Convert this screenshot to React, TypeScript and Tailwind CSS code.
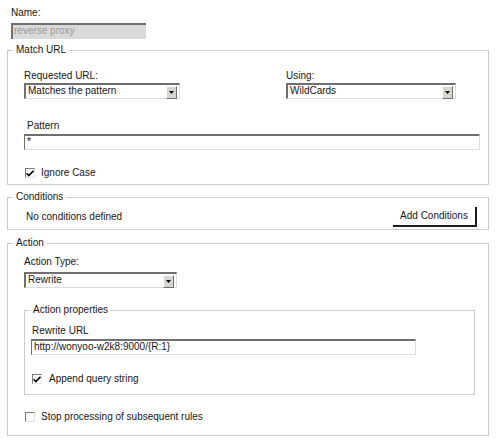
import React from 'react'

const font = { fontFamily: '"Liberation Sans", Arial, sans-serif' }

function Arrow() {
  return (
    <div className="absolute right-[2px] top-[1px] flex h-[13px] w-[11px] items-center justify-center border-t border-l border-white border-r border-b border-r-[#707070] border-b-[#707070] bg-[#d8d6d0]">
      <svg width="5" height="3" viewBox="0 0 5 3">
        <path d="M0 0h5L2.5 3z" fill="#000" />
      </svg>
    </div>
  )
}

function Select({ value, width }: { value: string; width: string }) {
  return (
    <div
      className={`relative h-[16px] ${width} border-t-2 border-l-2 border-t-[#6f6f6f] border-l-[#6f6f6f] border-r border-b border-r-[#dcdcdc] border-b-[#dcdcdc] bg-white pl-[2px] leading-[12px]`}
    >
      {value}
      <Arrow />
    </div>
  )
}

function TextBox({ value, width, className = '' }: { value: string; width: string; className?: string }) {
  return (
    <div
      className={`h-[16px] ${width} border-t-2 border-l border-t-[#6f6f6f] border-l-[#6f6f6f] border-r border-b border-r-[#dcdcdc] border-b-[#dcdcdc] bg-white pl-[2px] leading-[12px] ${className}`}
    >
      {value}
    </div>
  )
}

function Check({ checked }: { checked: boolean }) {
  return (
    <div className="flex h-[10px] w-[10px] items-center justify-center border-t border-l border-t-[#7a7a7a] border-l-[#7a7a7a] border-r border-b border-r-[#e4e4e4] border-b-[#e4e4e4] bg-white">
      {checked && (
        <svg width="8" height="7" viewBox="0 0 8 7">
          <path d="M0.5 3.2 L2.8 5.5 L7.5 0.8" stroke="#000" strokeWidth="1.6" fill="none" />
        </svg>
      )}
    </div>
  )
}

function Group({
  title,
  className,
  children,
}: {
  title: string
  className: string
  children: React.ReactNode
}) {
  return (
    <fieldset className={`border border-[#cbcbcb] p-0 ${className}`}>
      <legend className="ml-[5px] px-[3px] leading-[12px]">{title}</legend>
      {children}
    </fieldset>
  )
}

export default function App() {
  return (
    <div className="h-[442px] w-[504px] overflow-hidden bg-white text-[10px] text-[#161616]" style={font}>
      {/* Name */}
      <div className="ml-[11px] pt-[7px] leading-[12px]">Name:</div>
      <div className="ml-[11px] mt-[4px] h-[16px] w-[135px] border-t-2 border-l-2 border-t-[#707070] border-l-[#707070] bg-[#d9d9d9] pl-[1px] leading-[12px] text-[#9a9a9a]">
        reverse proxy
      </div>

      <div className="px-[7px]">
        {/* Match URL */}
        <Group title="Match URL" className="mt-[5px] h-[141px] w-[482px]">
          <div className="mt-[14px] flex pl-[16px]">
            <div className="w-[262px]">
              <div className="leading-[12px]">Requested URL:</div>
              <div className="mt-[1px]">
                <Select value="Matches the pattern" width="w-[156px]" />
              </div>
            </div>
            <div>
              <div className="leading-[12px]">Using:</div>
              <div className="mt-[1px]">
                <Select value="WildCards" width="w-[170px]" />
              </div>
            </div>
          </div>
          <div className="mt-[21px] pl-[19px] leading-[12px]">Pattern</div>
          <div className="mt-[2px] pl-[16px]">
            <TextBox value="*" width="w-[456px]" />
          </div>
          <div className="mt-[17px] flex items-center gap-[6px] pl-[17px] leading-[12px]">
            <Check checked />
            <span>Ignore Case</span>
          </div>
        </Group>

        {/* Conditions */}
        <Group title="Conditions" className="mt-[6px] h-[39px] w-[482px]">
          <div className="mt-[4px] flex items-center justify-between pl-[18px] pr-[11px]">
            <span className="leading-[12px]">No conditions defined</span>
            <button className="h-[20px] w-[84px] border-r-2 border-b-2 border-[#1c1c1c] bg-white text-[10px] leading-[12px]">
              Add Conditions
            </button>
          </div>
        </Group>

        {/* Action */}
        <Group title="Action" className="mt-[7px] h-[199px] w-[482px]">
          <div className="mt-[7px] pl-[16px] leading-[12px]">Action Type:</div>
          <div className="mt-[4px] pl-[16px]">
            <Select value="Rewrite" width="w-[153px]" />
          </div>

          <div className="pl-[16px]">
            <Group title="Action properties" className="mt-[16px] h-[91px] w-[451px]">
              <div className="mt-[9px] pl-[7px] leading-[12px]">Rewrite URL</div>
              <div className="mt-[2px] pl-[6px]">
                <TextBox value="http://wonyoo-w2k8:9000/{R:1}" width="w-[385px]" />
              </div>
              <div className="mt-[18px] flex items-center gap-[7px] pl-[7px] leading-[12px]">
                <Check checked />
                <span>Append query string</span>
              </div>
            </Group>
          </div>

          <div className="mt-[16px] flex items-center gap-[6px] pl-[17px] leading-[12px]">
            <Check checked={false} />
            <span>Stop processing of subsequent rules</span>
          </div>
        </Group>
      </div>
    </div>
  )
}
